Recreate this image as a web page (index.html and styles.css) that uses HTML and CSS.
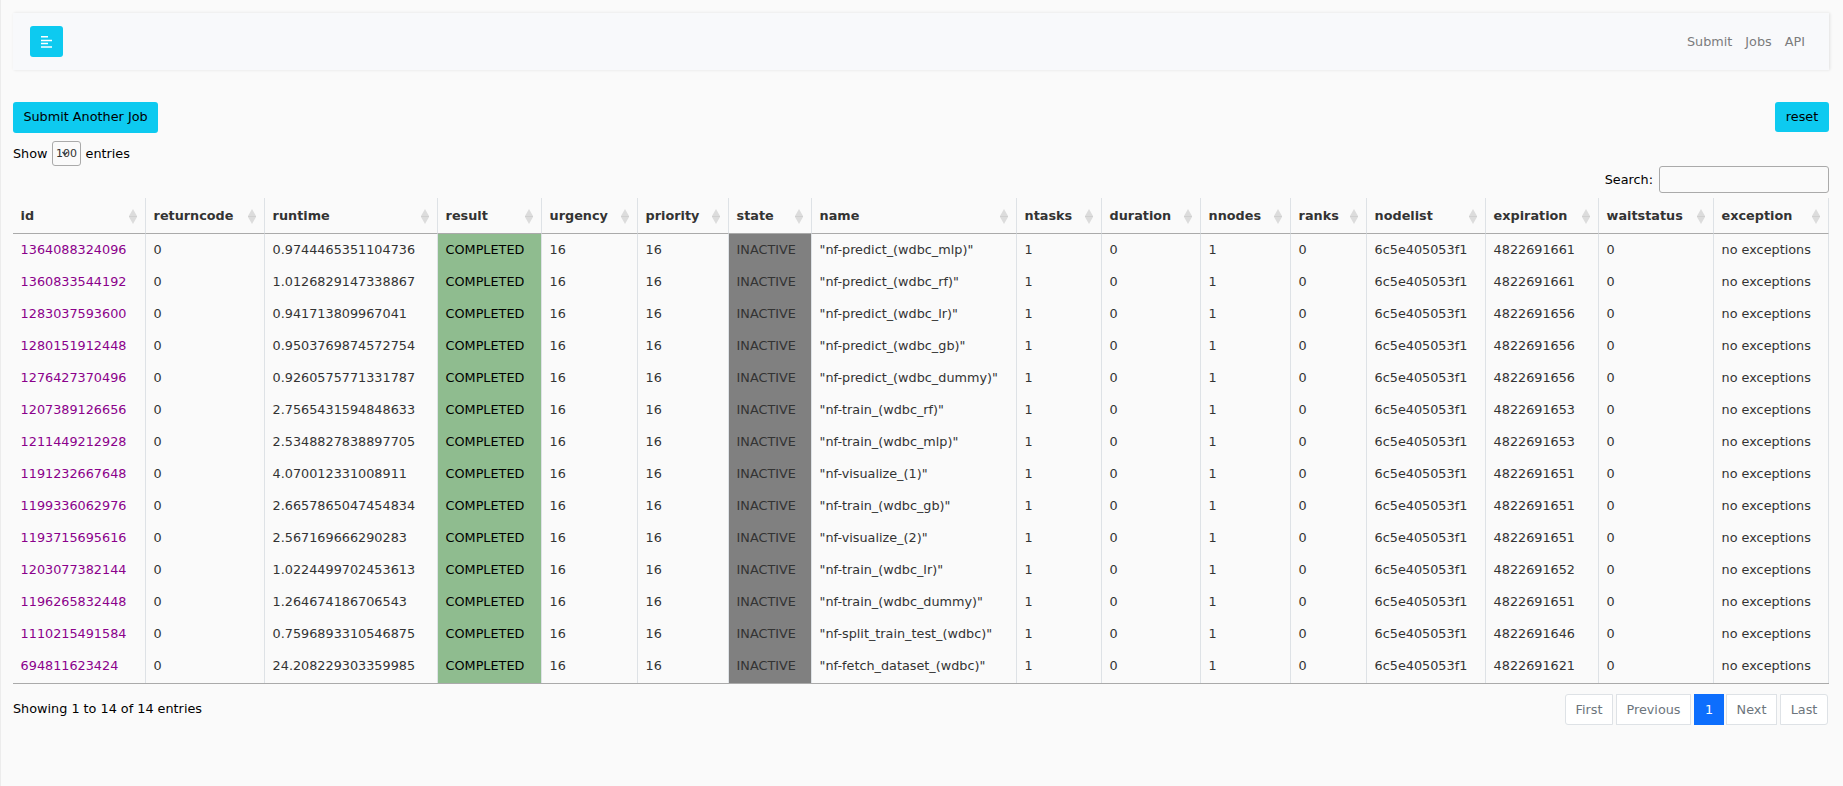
FILE: index.html
```html
<!DOCTYPE html>
<html lang="en">
<head>
<meta charset="utf-8">
<title>Jobs</title>
<link rel="stylesheet" href="styles.css">
</head>
<body>
<main class="content">
  <nav class="navbar">
    <button class="btn toggle" aria-label="Toggle sidebar"><svg width="11" height="13" viewBox="0 0 11 13" fill="none" stroke="#fff" stroke-width="1.5"><path d="M0 1.8h7M0 5.5h11M0 8.5h7M0 12.1h11"/></svg></button>
    <div class="links"><a>Submit</a><a>Jobs</a><a>API</a></div>
  </nav>
  <div class="actions"><button class="btn submit">Submit Another Job</button><button class="btn reset">reset</button></div>
  <div class="length"><span>Show</span><span class="select"><span>100</span><svg class="caret" width="6" height="5" viewBox="0 0 6 5" fill="none" stroke="#333b43" stroke-width="1.3"><path d="M.5 1 3 3.5 5.5 1"/></svg></span><span>entries</span></div>
  <div class="filter"><label for="q">Search:</label><input id="q" class="search"></div>
  <table class="jobs">
    <colgroup id="cols"></colgroup>
    <thead><tr id="head"></tr></thead>
    <tbody id="rows"></tbody>
  </table>
  <div class="footer">
    <span class="info">Showing 1 to 14 of 14 entries</span>
    <div class="pages"><a class="page first">First</a><a class="page previous">Previous</a><a class="page current">1</a><a class="page next">Next</a><a class="page last">Last</a></div>
  </div>
</main>
<script src="jobs.js"></script>
</body>
</html>
```
FILE: styles.css
```css
* { box-sizing: border-box; }
body { margin: 0; min-height: 786px; background: #fafafa; color: #000; font: 12.8px/19px "DejaVu Sans", sans-serif; border-left: 1px solid #ececec; }
.content { padding: 13px 14px 0 12px; }
.navbar { height: 57px; padding: 0 24px 0 17px; display: flex; align-items: center; justify-content: space-between; background: #f8f9fb; box-shadow: 1px 0 3px rgba(0,0,0,.1); }
.btn { height: 31px; padding: 0 10px 1px; border: 0; border-radius: 3px; background: #0dcaf0; color: #000; font: inherit; white-space: nowrap; }
.submit { width: 145px; padding-bottom: 2px; }
.toggle { width: 33px; display: flex; align-items: center; justify-content: center; padding: 0; margin-bottom: 1px; }
.links { display: flex; gap: 13px; color: #7b7c7d; }
.actions { margin-top: 32px; display: flex; justify-content: space-between; align-items: flex-start; }
.reset { height: 30px; width: 54px; }
.length { margin-top: 8px; height: 25px; display: flex; align-items: center; gap: 4.5px; line-height: 18px; padding-bottom: 0; }
.select { position: relative; width: 29px; height: 25px; border: 1px solid #aaa; border-radius: 3px; font-size: 11px; color: #333; display: flex; align-items: center; justify-content: center; }
.caret { position: absolute; left: 9px; top: 9px; }
.filter { height: 27px; display: flex; align-items: center; justify-content: flex-end; gap: 6px; line-height: 18px; }
.search { width: 170px; height: 27px; border: 1px solid #aaa; border-radius: 3px; background: transparent; }
.jobs { margin-top: 5px; width: 1816px; table-layout: fixed; border-collapse: separate; border-spacing: 0; color: #333; border-bottom: 1px solid #aaa; }
.jobs th, .jobs td { padding: 0 7.6px; border-right: 1px solid #dee2e6; text-align: left; white-space: nowrap; }
.jobs th { height: 36px; padding-bottom: 1px; border-bottom: 1px solid #aaa; }
.jobs td { height: 32px; padding-bottom: 1px; }
.jobs tbody tr:last-child td { height: 33px; padding-bottom: 2px; }
.heading { display: flex; align-items: center; justify-content: space-between; }
.sort { margin-top: 2px; }
.jobs .id { color: #8b008b; }
.jobs .completed { background: #8fbc8f; background-clip: padding-box; color: #000; }
.jobs .inactive { background: #808080; background-clip: padding-box; }
.footer { margin-top: 10px; display: flex; justify-content: space-between; }
.info { padding-top: 5px; }
.pages { display: flex; gap: 3px; margin-right: 1px; }
.page { height: 31px; border: 1px solid #dee2e6; background: #fff; color: #6c757d; display: flex; align-items: center; justify-content: center; padding-bottom: 1px; }
.first { width: 48px; border-radius: 3px 0 0 3px; }
.previous { width: 75px; }
.current { width: 30px; background: #0d6efd; border-color: #0d6efd; color: #fff; }
.next { width: 51px; margin-left: -1px; }
.last { width: 48px; border-radius: 0 3px 3px 0; }
```
FILE: jobs.js
```js
const columns = [["id",133],["returncode",119],["runtime",173],["result",104],["urgency",96],["priority",91],["state",83],["name",205],["ntasks",85],["duration",99],["nnodes",90],["ranks",76],["nodelist",119],["expiration",113],["waitstatus",115],["exception",115]];
const jobs = [
["1364088324096","0.9744465351104736","nf-predict_(wdbc_mlp)","4822691661"],
["1360833544192","1.0126829147338867","nf-predict_(wdbc_rf)","4822691661"],
["1283037593600","0.941713809967041","nf-predict_(wdbc_lr)","4822691656"],
["1280151912448","0.9503769874572754","nf-predict_(wdbc_gb)","4822691656"],
["1276427370496","0.9260575771331787","nf-predict_(wdbc_dummy)","4822691656"],
["1207389126656","2.7565431594848633","nf-train_(wdbc_rf)","4822691653"],
["1211449212928","2.5348827838897705","nf-train_(wdbc_mlp)","4822691653"],
["1191232667648","4.070012331008911","nf-visualize_(1)","4822691651"],
["1199336062976","2.6657865047454834","nf-train_(wdbc_gb)","4822691651"],
["1193715695616","2.567169666290283","nf-visualize_(2)","4822691651"],
["1203077382144","1.0224499702453613","nf-train_(wdbc_lr)","4822691652"],
["1196265832448","1.264674186706543","nf-train_(wdbc_dummy)","4822691651"],
["1110215491584","0.7596893310546875","nf-split_train_test_(wdbc)","4822691646"],
["694811623424","24.208229303359985","nf-fetch_dataset_(wdbc)","4822691621"]
];
const arrows = '<svg class="sort" width="8" height="15" viewBox="0 0 8 15"><path fill="#dcdcdc" d="M4 0 8 7H0zM4 15 0 8h8z"/><path fill="#d0d0d0" d="M0 7h8v1H0z"/></svg>';
document.getElementById("cols").innerHTML = columns.map(c => `<col style="width:${c[1]}px">`).join("");
document.getElementById("head").innerHTML = columns.map(c => `<th><div class="heading"><span>${c[0]}</span>${arrows}</div></th>`).join("");
document.getElementById("rows").innerHTML = jobs.map(([id, runtime, name, exp]) => {
  const values = [id,"0",runtime,"COMPLETED","16","16","INACTIVE",`"${name}"`,"1","0","1","0","6c5e405053f1",exp,"0","no exceptions"];
  const kinds = {0:"id",3:"completed",6:"inactive"};
  return "<tr>" + values.map((v, i) => `<td class="${kinds[i] || "plain"}">${v}</td>`).join("") + "</tr>";
}).join("");
```
